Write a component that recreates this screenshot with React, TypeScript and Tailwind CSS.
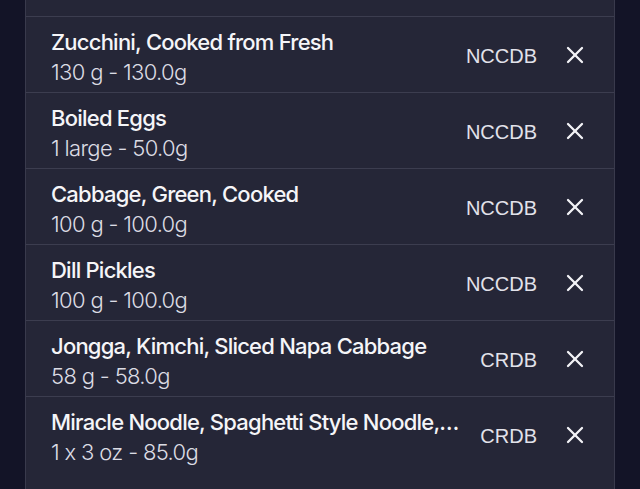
import React from "react";

const items = [
  { name: "Zucchini, Cooked from Fresh", sub: "130 g - 130.0g", src: "NCCDB" },
  { name: "Boiled Eggs", sub: "1 large - 50.0g", src: "NCCDB" },
  { name: "Cabbage, Green, Cooked", sub: "100 g - 100.0g", src: "NCCDB" },
  { name: "Dill Pickles", sub: "100 g - 100.0g", src: "NCCDB" },
  { name: "Jongga, Kimchi, Sliced Napa Cabbage", sub: "58 g - 58.0g", src: "CRDB" },
  { name: "Miracle Noodle, Spaghetti Style Noodle,…", sub: "1 x 3 oz - 85.0g", src: "CRDB" },
];

function XIcon() {
  return (
    <svg width="24" height="24" viewBox="0 0 24 24" fill="none" stroke="#f2f2f6" strokeWidth="2.3" strokeLinecap="round">
      <path d="M5 5L19 19" />
      <path d="M19 5L5 19" />
    </svg>
  );
}

export default function App() {
  return (
    <div className="w-[640px] h-[489px] overflow-hidden bg-[#131427] flex justify-center">
      <div className="w-[590px] h-full bg-[#252637] border-x border-[#393a4c] flex flex-col">
        <div className="h-[17px] shrink-0 border-b border-[#3c3d4f]" />
        {items.map((it, i) => (
          <div
            key={i}
            className={
              i === items.length - 1
                ? "h-[75px] shrink-0 flex items-center pl-[25px] pr-[27px]"
                : "h-[76px] shrink-0 border-b border-[#3c3d4f] flex items-center pl-[25px] pr-[27px]"
            }
          >
            <div className="w-[404px] shrink-0 flex flex-col pt-[5px]" style={{ fontFamily: "Inter, 'Noto Sans', sans-serif" }}>
              <div className="text-[22px] leading-[30px] font-medium text-[#f5f5f8] tracking-[-0.035em] whitespace-nowrap">{it.name}</div>
              <div className="text-[22px] leading-[30px] font-light text-[#dcdce4] tracking-[-0.03em] whitespace-nowrap">{it.sub}</div>
            </div>
            <div className="flex-1 flex justify-end items-center">
              <span className="text-[20px] text-[#e2e2ea] mt-[2px]" style={{ fontFamily: "'Liberation Sans', Arial, sans-serif" }}>{it.src}</span>
            </div>
            <div className="ml-[26px] w-[24px] h-[24px] flex items-center justify-center">
              <XIcon />
            </div>
          </div>
        ))}
      </div>
    </div>
  );
}
